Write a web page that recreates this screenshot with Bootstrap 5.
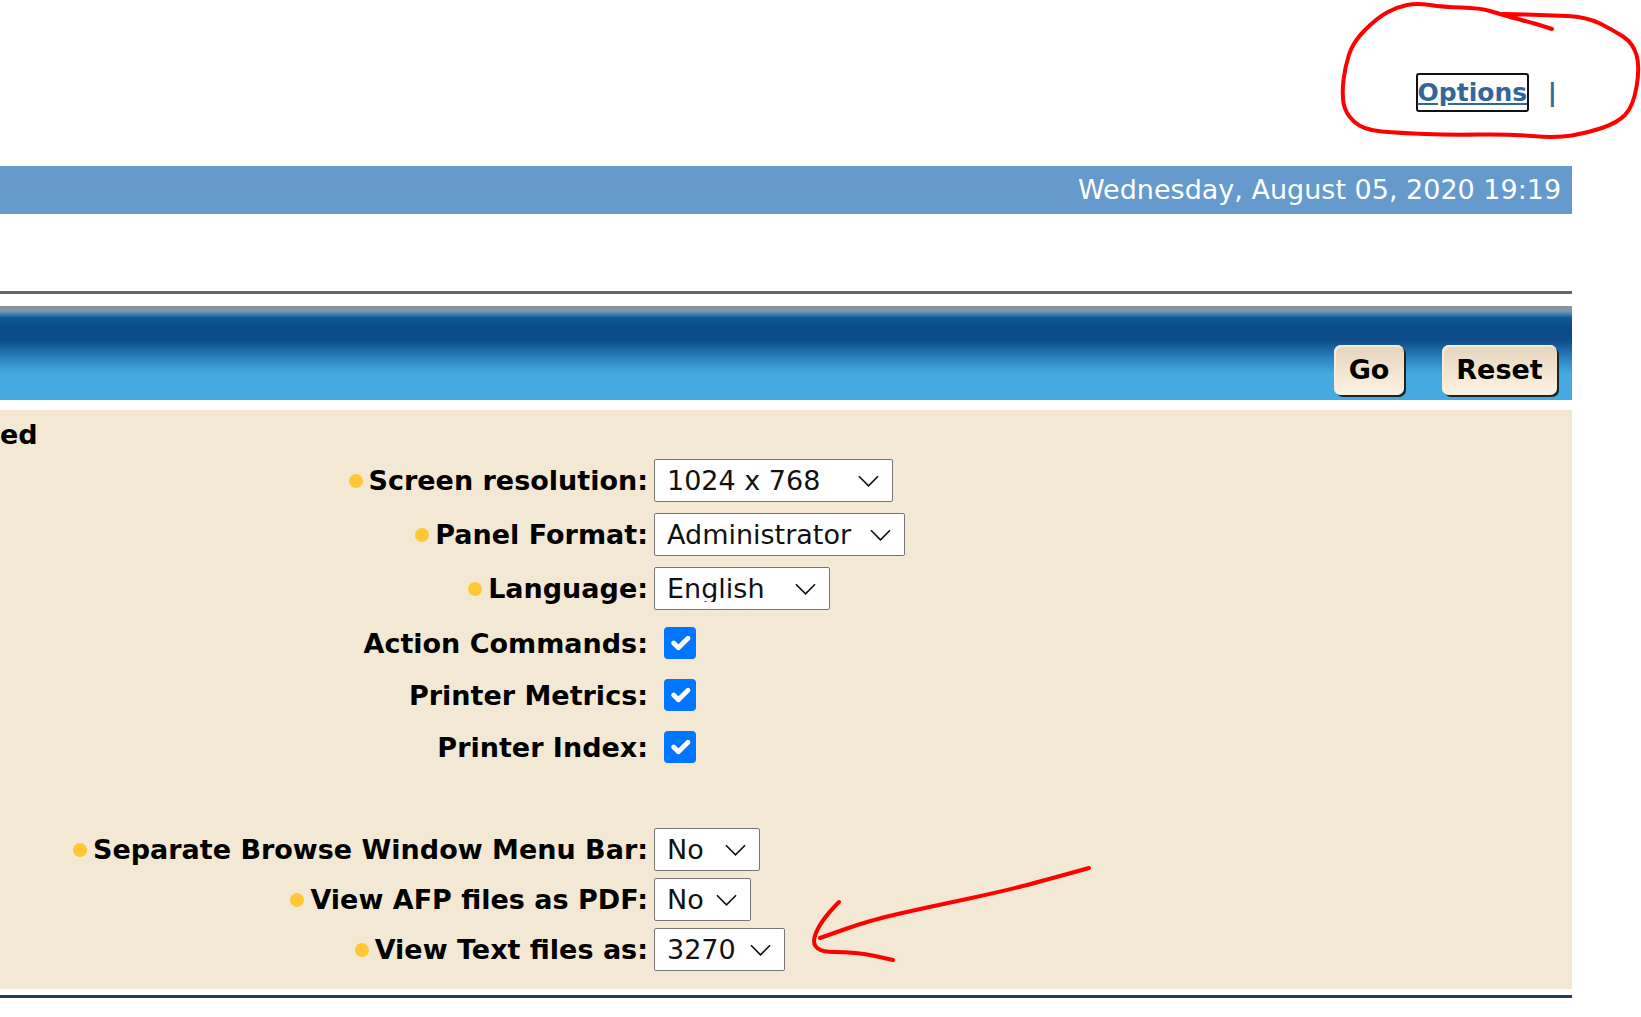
<!DOCTYPE html>
<html lang="en">
<head>
  <meta charset="UTF-8">
  <meta name="viewport" content="width=device-width, initial-scale=1.0">
  <title>Options</title>
  <link href="https://cdn.jsdelivr.net/npm/bootstrap@5.3.0/dist/css/bootstrap.min.css" rel="stylesheet">
  <style>
    body { background: #fff; font-family: "DejaVu Sans", sans-serif; color: #000; }
    .page-wrap { width: 1572px; overflow: hidden; }
    .top-links { height: 166px; padding: 73px 15px 0 0; color: #336699; font-size: 25px; font-weight: 700; }
    .options-link { height: 39px; width: 113px; border: 2px solid #111; border-radius: 3px; color: #336699; }
    .link-sep { margin-left: 19px; line-height: 39px; }
    .date-bar { height: 48px; padding-left: 1078px; background: #6699cc; color: #fff; font-size: 27px; line-height: 48px; white-space: nowrap; }
    .gray-rule { height: 3px; margin-top: 77px; background: #666; }
    .action-bar {
      height: 94px; margin-top: 12px; padding: 39px 15px 0 0;
      background: linear-gradient(#909090 0, #909090 3px, #6f9cc4 5px, #0f5a99 12px, #0a4a87 20px, #0b4b88 34px, #2e88c4 54px, #45aadf 68px, #45aadf 100%);
    }
    .action-btn {
      height: 50px; padding: 0; border: 0; border-radius: 7px;
      background: linear-gradient(#e6d3bb, #fff3e4);
      box-shadow: inset 2px 2px 1px #f6eadb, 2px 2px 0 #222;
      color: #000; font-size: 27px; font-weight: 700; line-height: 50px;
    }
    .go-btn { width: 70px; margin-right: 38px; }
    .reset-btn { width: 115px; }
    .options-panel { margin-top: 10px; padding-bottom: 18px; background: #f3e8d3; }
    .panel-title { height: 49px; font-size: 27px; font-weight: 700; line-height: 49px; }
    .opt-group { display: flex; flex-direction: column; }
    .group-selects { gap: 11px; }
    .group-checks { gap: 20px; margin-top: 17px; }
    .group-view { gap: 7px; margin-top: 65px; }
    .opt-label { width: 648px; margin-right: 6px; font-size: 27px; font-weight: 700; line-height: 1; white-space: nowrap; }
    .opt-dot { width: 14px; height: 14px; margin-right: 6px; border-radius: 50%; background: #ffc733; }
    .opt-select {
      height: 43px; padding: 0 36px 0 12px; border: 1px solid #767676; border-radius: 2px;
      color: #111; font-size: 27px; line-height: 1;
      background-image: url("data:image/svg+xml,%3csvg xmlns='http://www.w3.org/2000/svg' viewBox='0 0 22 12'%3e%3cpath fill='none' stroke='%23111' stroke-width='1.7' d='M1 1l10 10L21 1'/%3e%3c/svg%3e");
      background-position: right 13px center; background-size: 21px 12px;
    }
    .w-res { width: 239px; }
    .w-panel { width: 251px; }
    .w-lang { width: 176px; }
    .w-bar { width: 106px; }
    .w-afp { width: 97px; }
    .w-text { width: 131px; }
    .opt-check { width: 32px; height: 32px; margin: 0 0 0 10px; border: 0; border-radius: 5px; }
    .opt-check:checked { background-color: #0075ff; }
    .navy-rule { height: 3px; margin-top: 6px; background: #1f3864; }
    .scribbles { position: absolute; top: 0; left: 0; width: 1641px; height: 1017px; pointer-events: none; }
    .scribbles path { fill: none; stroke: #f00; stroke-width: 4; stroke-linecap: round; stroke-linejoin: round; }
  </style>
</head>
<body>
  <div class="page-wrap">
    <div class="top-links d-flex justify-content-end align-items-start">
      <a href="#" class="options-link d-flex align-items-center justify-content-center">Options</a>
      <span class="link-sep">|</span>
    </div>
    <div class="date-bar">Wednesday, August 05, 2020 19:19</div>
    <div class="gray-rule"></div>
    <div class="action-bar d-flex justify-content-end align-items-start">
      <button type="button" class="btn action-btn go-btn">Go</button>
      <button type="button" class="btn action-btn reset-btn">Reset</button>
    </div>
    <div class="options-panel">
      <div class="panel-title">ed</div>
      <div class="opt-group group-selects">
        <div class="d-flex align-items-center">
          <label class="opt-label d-flex justify-content-end align-items-center"><span class="opt-dot"></span>Screen resolution:</label>
          <select class="form-select opt-select w-res"><option>1024 x 768</option></select>
        </div>
        <div class="d-flex align-items-center">
          <label class="opt-label d-flex justify-content-end align-items-center"><span class="opt-dot"></span>Panel Format:</label>
          <select class="form-select opt-select w-panel"><option>Administrator</option></select>
        </div>
        <div class="d-flex align-items-center">
          <label class="opt-label d-flex justify-content-end align-items-center"><span class="opt-dot"></span>Language:</label>
          <select class="form-select opt-select w-lang"><option>English</option></select>
        </div>
      </div>
      <div class="opt-group group-checks">
        <div class="d-flex align-items-center">
          <label class="opt-label text-end">Action Commands:</label>
          <input class="form-check-input opt-check" type="checkbox" checked>
        </div>
        <div class="d-flex align-items-center">
          <label class="opt-label text-end">Printer Metrics:</label>
          <input class="form-check-input opt-check" type="checkbox" checked>
        </div>
        <div class="d-flex align-items-center">
          <label class="opt-label text-end">Printer Index:</label>
          <input class="form-check-input opt-check" type="checkbox" checked>
        </div>
      </div>
      <div class="opt-group group-view">
        <div class="d-flex align-items-center">
          <label class="opt-label d-flex justify-content-end align-items-center"><span class="opt-dot"></span>Separate Browse Window Menu Bar:</label>
          <select class="form-select opt-select w-bar"><option>No</option></select>
        </div>
        <div class="d-flex align-items-center">
          <label class="opt-label d-flex justify-content-end align-items-center"><span class="opt-dot"></span>View AFP files as PDF:</label>
          <select class="form-select opt-select w-afp"><option>No</option></select>
        </div>
        <div class="d-flex align-items-center">
          <label class="opt-label d-flex justify-content-end align-items-center"><span class="opt-dot"></span>View Text files as:</label>
          <select class="form-select opt-select w-text"><option>3270</option></select>
        </div>
      </div>
    </div>
    <div class="navy-rule"></div>
  </div>

  <svg class="scribbles" viewBox="0 0 1641 1017" aria-hidden="true">
    <path id="scribble-ring"></path>
    <path id="scribble-shaft"></path>
    <path id="scribble-head"></path>
  </svg>

  <script>
    // smooth a list of points through the midpoints, for the hand drawn marks
    function smoothPath(pts) {
      let d = `M${pts[0][0]} ${pts[0][1]}`;
      for (let i = 1; i < pts.length - 1; i++) {
        const mx = (pts[i][0] + pts[i + 1][0]) / 2;
        const my = (pts[i][1] + pts[i + 1][1]) / 2;
        d += ` Q${pts[i][0]} ${pts[i][1]} ${mx} ${my}`;
      }
      const last = pts[pts.length - 1];
      return d + ` L${last[0]} ${last[1]}`;
    }

    document.getElementById('scribble-ring').setAttribute('d', smoothPath([
      [1552, 29], [1533, 23], [1510, 17], [1500, 14], [1480, 8], [1443, 7], [1417, 3], [1397, 7],
      [1377, 18], [1353, 42], [1345, 67], [1342, 93], [1345, 113], [1363, 130], [1400, 133],
      [1450, 135], [1507, 134], [1557, 138], [1587, 133], [1617, 123], [1633, 107], [1640, 67],
      [1633, 43], [1613, 30], [1587, 17], [1547, 15], [1503, 14]
    ]));
    document.getElementById('scribble-shaft').setAttribute('d', smoothPath([
      [1089, 868], [1046, 880], [1000, 892], [929, 907], [871, 920], [820, 938]
    ]));
    document.getElementById('scribble-head').setAttribute('d', smoothPath([
      [839, 902], [818, 923], [811, 952], [857, 952], [893, 960]
    ]));
  </script>
  <script src="https://cdn.jsdelivr.net/npm/bootstrap@5.3.0/dist/js/bootstrap.bundle.min.js"></script>
</body>
</html>
